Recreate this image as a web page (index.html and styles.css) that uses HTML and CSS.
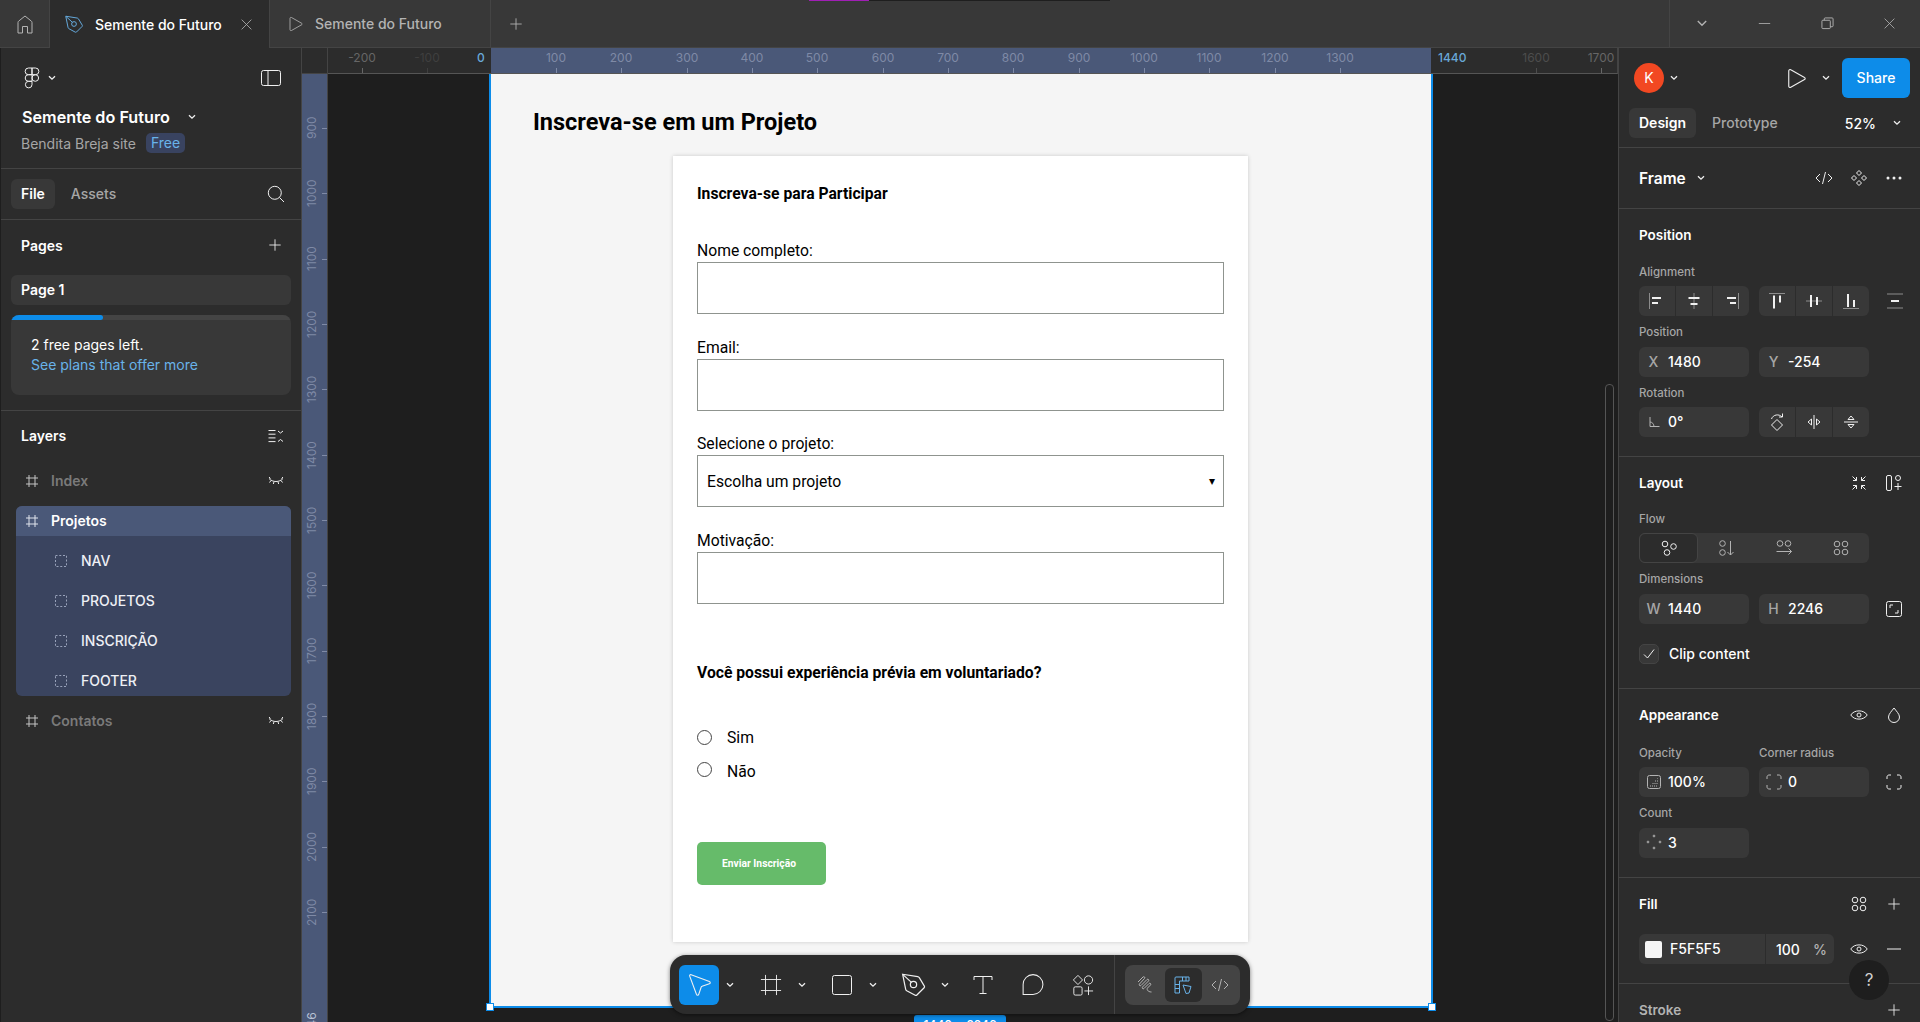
FILE: index.html
```html
<!DOCTYPE html>
<html lang="pt-BR">
<head>
    <meta charset="UTF-8">
    <title>Semente do Futuro</title>
    <link rel="stylesheet" href="styles.css">
</head>
<body>
    <svg class="sprite" xmlns="http://www.w3.org/2000/svg">
        <symbol id="i-chev" viewBox="0 0 10 6"><path d="M2 1.2l3 3 3-3"/></symbol>
        <symbol id="i-home" viewBox="0 0 24 24"><path d="M5 21V10.500c0-.6.2-1 .7-1.400L12 4l6.300 5.100c.5.4.7.8.7 1.400V21h-4.500v-6.500h-5V21z"/></symbol>
        <symbol id="i-pen" viewBox="0 0 24 24"><path d="M3 3.500l12.500 2c.6.1 1 .4 1.300.8l4.200 7c.3.5.2 1-.2 1.400l-6 6c-.4.4-1 .4-1.400.2l-7-3.800c-.5-.3-.8-.7-.9-1.300z"/><circle cx="12" cy="12" r="2.600"/><path d="M3.500 4l6.800 6.200"/></symbol>
        <symbol id="i-play" viewBox="0 0 24 24"><path d="M6 5.200c0-1 1-1.500 1.800-1L20 11.100c.8.4.8 1.400 0 1.800L7.800 19.800c-.8.5-1.800 0-1.800-1z"/></symbol>
        <symbol id="i-x" viewBox="0 0 16 16"><path d="M2 2l12 12M14 2L2 14"/></symbol>
        <symbol id="i-plus" viewBox="0 0 16 16"><path d="M8 1.500v13M1.500 8h13"/></symbol>
        <symbol id="i-minus" viewBox="0 0 16 16"><path d="M1 8h14"/></symbol>
        <symbol id="i-restore" viewBox="0 0 14 14"><rect x="1" y="3.500" width="9" height="9" rx="1"/><path d="M3.500 3.500V2c0-.6.4-1 1-1H12c.6 0 1 .4 1 1v7.500c0 .6-.4 1-1 1h-2"/></symbol>
        <symbol id="i-figma" viewBox="0 0 16 22"><path d="M8 1H4.500a3.300 3.300 0 000 6.700H8zM8 1h3.500a3.300 3.300 0 010 6.700H8zM8 7.700H4.500a3.300 3.300 0 000 6.600H8zM8 14.300H4.500A3.300 3.300 0 108 17.600z"/><circle cx="11.300" cy="11" r="3.300"/></symbol>
        <symbol id="i-side" viewBox="0 0 20 16"><rect x=".5" y=".5" width="19" height="15" rx="2"/><path d="M7 .5v15"/></symbol>
        <symbol id="i-search" viewBox="0 0 18 18"><circle cx="7.800" cy="7.800" r="6.500"/><path d="M12.500 12.500l4.500 4.500"/></symbol>
        <symbol id="i-collapse" viewBox="0 0 16 14"><path d="M.5 1.500h7M.5 5.200h7M.5 8.900h7M.5 12.600h7M10 2l2.500 2L15 2M10 12.500l2.500-2 2.500 2"/></symbol>
        <symbol id="i-hash" viewBox="0 0 14 14"><path d="M4 1v12M10 1v12M1 4h12M1 10h12"/></symbol>
        <symbol id="i-eyeoff" viewBox="0 0 16 10"><path d="M1 2.500c3.500 4 10.500 4 14 0M3 4.500L1.500 6.500M6 5.800L5.300 8M10 5.800l.7 2.200M13 4.500l1.500 2M1 1l1.500 1.600M15 1l-1.500 1.600"/></symbol>
        <symbol id="i-dashed" viewBox="0 0 12 12"><rect x=".5" y=".5" width="11" height="11" stroke-dasharray="2 1.750"/></symbol>
        <symbol id="i-code" viewBox="0 0 18 14"><path d="M5 3L1 7l4 4M13 3l4 4-4 4M10.500 1L7.500 13"/></symbol>
        <symbol id="i-comp" viewBox="0 0 16 16"><path d="M8 .5l2.500 2.500L8 5.500 5.500 3zM3 5.500L5.500 8 3 10.500.5 8zM13 5.500L15.500 8 13 10.500 10.500 8zM8 10.500l2.500 2.500L8 15.500 5.500 13z"/></symbol>
        <symbol id="i-dots" viewBox="0 0 16 4"><circle cx="2" cy="2" r="1.500"/><circle cx="8" cy="2" r="1.500"/><circle cx="14" cy="2" r="1.500"/></symbol>
        <symbol id="i-al-left" viewBox="0 0 18 18"><path stroke="#8c8c8c" d="M1.500 1v16"/><path stroke-width="2" d="M4 6h9M4 11h6"/></symbol>
        <symbol id="i-al-center" viewBox="0 0 18 18"><path stroke="#8c8c8c" d="M9 1v16"/><path stroke-width="2" d="M3.500 6h11M5.500 12h7"/></symbol>
        <symbol id="i-al-right" viewBox="0 0 18 18"><path stroke="#8c8c8c" d="M16.500 1v16"/><path stroke-width="2" d="M5 6h9M8 11h6"/></symbol>
        <symbol id="i-al-top" viewBox="0 0 18 18"><path stroke="#8c8c8c" d="M1 1.500h16"/><path stroke-width="2" d="M6 3.500v13M12 3.500v7"/></symbol>
        <symbol id="i-al-mid" viewBox="0 0 18 18"><path stroke="#8c8c8c" d="M1 9h16"/><path stroke-width="2" d="M6 3v12M12 5v8"/></symbol>
        <symbol id="i-al-bot" viewBox="0 0 18 18"><path stroke="#8c8c8c" d="M1 16.500h16"/><path stroke-width="2" d="M6 2v13M12 8v7"/></symbol>
        <symbol id="i-distrib" viewBox="0 0 18 16"><path stroke="#8c8c8c" d="M1 1h16M1 15h16"/><path stroke-width="2" d="M5 8h8"/></symbol>
        <symbol id="i-angle" viewBox="0 0 12 12"><path d="M2 1v9.500h9.500M2 6c2 0 4 2 4 4.500"/></symbol>
        <symbol id="i-rotate" viewBox="0 0 16 20"><path d="M8 7.500l5.500 5.500L8 18.500 2.500 13zM2.500 7C4 2.500 10 1.500 13 5M13.500 1.500V5H10"/></symbol>
        <symbol id="i-fliph" viewBox="0 0 16 16"><path d="M8 1v14M5.500 5v6L2 8zM10.500 5v6L14 8z"/></symbol>
        <symbol id="i-flipv" viewBox="0 0 16 16"><path d="M1 8h14M5 5.500h6L8 2zM5 10.500h6L8 14z"/></symbol>
        <symbol id="i-shrink" viewBox="0 0 16 16"><path d="M1.500 1.500l4 4M2 5.500h3.500V2M14.500 1.500l-4 4M14 5.500h-3.500V2M1.500 14.500l4-4M2 10.500h3.500V14M14.500 14.500l-4-4M14 10.500h-3.500V14"/></symbol>
        <symbol id="i-autolayout" viewBox="0 0 16 16"><rect x=".5" y=".5" width="5" height="15" rx="1.500"/><circle cx="12" cy="3" r="2.500"/><path d="M12 8v7M8.500 11.500h7"/></symbol>
        <symbol id="i-freeflow" viewBox="0 0 16 16"><circle cx="4" cy="4" r="2.800"/><circle cx="12.500" cy="6.500" r="2.800"/><circle cx="6" cy="12.500" r="2.800"/></symbol>
        <symbol id="i-vert" viewBox="0 0 16 16"><circle cx="3.500" cy="3.500" r="2.800"/><circle cx="3.500" cy="12.500" r="2.800"/><path d="M11.500 1v14M8.500 12l3 3 3-3"/></symbol>
        <symbol id="i-horiz" viewBox="0 0 16 16"><circle cx="4" cy="3.500" r="2.800"/><circle cx="12" cy="3.500" r="2.800"/><path d="M.5 11.500h15M12.500 8.500l3 3-3 3"/></symbol>
        <symbol id="i-grid" viewBox="0 0 16 16"><circle cx="4" cy="4" r="2.800"/><circle cx="12" cy="4" r="2.800"/><circle cx="4" cy="12" r="2.800"/><circle cx="12" cy="12" r="2.800"/></symbol>
        <symbol id="i-resize" viewBox="0 0 16 16"><rect x=".5" y=".5" width="15" height="15" rx="2"/><path d="M4 7V4h3M12 9v3H9"/></symbol>
        <symbol id="i-check" viewBox="0 0 12 12"><path d="M1 6.500l3.500 3.500L11 1.500"/></symbol>
        <symbol id="i-eye" viewBox="0 0 18 12"><path d="M.8 6C4 .5 14 .5 17.200 6 14 11.500 4 11.500.8 6z"/><circle cx="9" cy="6" r="2"/></symbol>
        <symbol id="i-drop" viewBox="0 0 14 16"><path d="M7 1c2 2.800 5.500 6 5.500 9a5.500 5.500 0 01-11 0C1.500 7 5 3.800 7 1z"/></symbol>
        <symbol id="i-opacity" viewBox="0 0 14 14"><rect x=".5" y=".5" width="13" height="13" rx="2"/><path d="M3 11h8M5.500 8.500h5.500M8 6h3M10.500 3.500h.5" stroke-dasharray="1 1"/></symbol>
        <symbol id="i-corners" viewBox="0 0 16 16"><path d="M1 5V3c0-1.100.9-2 2-2h2M11 1h2c1.100 0 2 .9 2 2v2M15 11v2c0 1.100-.9 2-2 2h-2M5 15H3c-1.100 0-2-.9-2-2v-2"/></symbol>
        <symbol id="i-count" viewBox="0 0 16 16"><circle cx="8" cy="2" r=".9"/><circle cx="2" cy="8" r=".9"/><circle cx="14" cy="8" r=".9"/><circle cx="8" cy="14" r=".9"/></symbol>
        <symbol id="i-move" viewBox="0 0 24 24"><path d="M3.300 4.600c-.3-.9.4-1.600 1.300-1.300l16.200 6c1 .4 1 1.700 0 2l-6.500 2.200c-.4.1-.7.4-.8.800l-2.200 6.500c-.3 1-1.600 1-2 0z"/></symbol>
        <symbol id="i-frame" viewBox="0 0 24 24"><path d="M6 1v22M18 1v22M1 6h22M1 18h22"/></symbol>
        <symbol id="i-rect" viewBox="0 0 24 24"><rect x="2.500" y="2.500" width="19" height="19" rx="2"/></symbol>
        <symbol id="i-text" viewBox="0 0 24 24"><path d="M3 7V3.500h18V7M12 3.500v17M8.500 20.500h7"/></symbol>
        <symbol id="i-comment" viewBox="0 0 24 24"><path d="M3 21.500V12a9.500 9.500 0 1 1 9.500 9.500z"/></symbol>
        <symbol id="i-actions" viewBox="0 0 24 24"><path d="M6.500 1.500l5 5-5 5-5-5z"/><circle cx="18" cy="6.500" r="4.500"/><rect x="2" y="14" width="9" height="9" rx="1.500"/><path d="M18 13.500v9.500M13.500 18.500h9.500"/></symbol>
        <symbol id="i-draw" viewBox="0 0 20 20"><path d="M2 7l5-5c1-1 2.500.5 1.500 1.500L3.500 9C2.500 10 4 11.500 5 10.500l6-6c1-1 2.500.5 1.500 1.500L6.500 12c-1 1 .5 2.500 1.500 1.500l5-5c1-1 2.500.5 1.500 1.500l-3 3c-1 1 0 4 4 4"/></symbol>
        <symbol id="i-design" viewBox="0 0 20 20"><path d="M2 18V3c0-.6.4-1 1-1h13v4H6.500v12zM9.500 2v4M13 2v4M2 9.500h4.500M2 13.500h4.500"/><path d="M10 10l8 1.500-2 6.500-3 .5z"/></symbol>
    </svg>

    <header class="topbar">
        <div class="top-home"><svg class="ic ic-24 muted"><use href="#i-home"/></svg></div>
        <div class="tab tab-active">
            <svg class="ic ic-22 blue"><use href="#i-pen"/></svg>
            <span class="tab-name">Semente do Futuro</span>
            <svg class="ic ic-13 tab-close"><use href="#i-x"/></svg>
        </div>
        <div class="tab">
            <svg class="ic ic-20 muted"><use href="#i-play"/></svg>
            <span class="tab-name">Semente do Futuro</span>
        </div>
        <div class="top-plus"><svg class="ic ic-14 muted"><use href="#i-plus"/></svg></div>
        <div class="top-spacer"></div>
        <div class="win-controls">
            <svg class="ic win-chev muted"><use href="#i-chev"/></svg>
            <svg class="ic ic-13 muted"><use href="#i-minus"/></svg>
            <svg class="ic ic-13 muted"><use href="#i-restore"/></svg>
            <svg class="ic ic-13 muted"><use href="#i-x"/></svg>
        </div>
        <div class="progress-line"><span></span></div>
    </header>

    <div class="main">
        <aside class="left-panel">
            <div class="file-head">
                <div class="logo-row">
                    <svg class="ic logo"><use href="#i-figma"/></svg>
                    <svg class="ic chev"><use href="#i-chev"/></svg>
                    <svg class="ic side-toggle"><use href="#i-side"/></svg>
                </div>
                <div class="file-title">Semente do Futuro <svg class="ic chev"><use href="#i-chev"/></svg></div>
                <div class="file-team">Bendita Breja site <span class="badge-free">Free</span></div>
            </div>
            <div class="left-tabs">
                <span class="pill">File</span>
                <span class="pill-off">Assets</span>
                <svg class="ic ic-18 left-search"><use href="#i-search"/></svg>
            </div>
            <div class="pages">
                <div class="left-head">Pages <svg class="ic ic-14"><use href="#i-plus"/></svg></div>
                <div class="page-row">Page 1</div>
                <div class="promo">
                    <div class="promo-bar"><span></span></div>
                    <p>2 free pages left.</p>
                    <a href="#">See plans that offer more</a>
                </div>
            </div>
            <div class="layers">
                <div class="left-head">Layers <svg class="ic collapse"><use href="#i-collapse"/></svg></div>
                <div class="layer hidden-layer">
                    <svg class="ic ic-14"><use href="#i-hash"/></svg>
                    <span>Index</span>
                    <svg class="ic eyeoff"><use href="#i-eyeoff"/></svg>
                </div>
                <div class="layer-group">
                    <div class="layer layer-selected">
                        <svg class="ic ic-14"><use href="#i-hash"/></svg>
                        <span>Projetos</span>
                    </div>
                    <div class="layer layer-child"><svg class="ic ic-12"><use href="#i-dashed"/></svg><span>NAV</span></div>
                    <div class="layer layer-child"><svg class="ic ic-12"><use href="#i-dashed"/></svg><span>PROJETOS</span></div>
                    <div class="layer layer-child"><svg class="ic ic-12"><use href="#i-dashed"/></svg><span>INSCRIÇÃO</span></div>
                    <div class="layer layer-child"><svg class="ic ic-12"><use href="#i-dashed"/></svg><span>FOOTER</span></div>
                </div>
                <div class="layer hidden-layer">
                    <svg class="ic ic-14"><use href="#i-hash"/></svg>
                    <span>Contatos</span>
                    <svg class="ic eyeoff"><use href="#i-eyeoff"/></svg>
                </div>
            </div>
        </aside>

        <div class="canvas-wrap">
            <div class="ruler-corner"></div>
            <div class="ruler-top">
                <div class="ruler-band"></div>
                <span class="rt rt-mid" style="left:34px"><i>-200</i></span>
                <span class="rt rt-dim" style="left:99px"><i>-100</i></span>
                <span class="rt-edge rt-zero">0</span>
                <span class="rt rt-on" style="left:228px"><i>100</i></span>
                <span class="rt rt-on" style="left:293px"><i>200</i></span>
                <span class="rt rt-on" style="left:359px"><i>300</i></span>
                <span class="rt rt-on" style="left:424px"><i>400</i></span>
                <span class="rt rt-on" style="left:489px"><i>500</i></span>
                <span class="rt rt-on" style="left:555px"><i>600</i></span>
                <span class="rt rt-on" style="left:620px"><i>700</i></span>
                <span class="rt rt-on" style="left:685px"><i>800</i></span>
                <span class="rt rt-on" style="left:751px"><i>900</i></span>
                <span class="rt rt-on" style="left:816px"><i>1000</i></span>
                <span class="rt rt-on" style="left:881px"><i>1100</i></span>
                <span class="rt rt-on" style="left:947px"><i>1200</i></span>
                <span class="rt rt-on" style="left:1012px"><i>1300</i></span>
                <span class="rt-edge rt-end">1440</span>
                <span class="rt rt-dim2" style="left:1208px"><i>1600</i></span>
                <span class="rt rt-mid" style="left:1273px"><i>1700</i></span>
            </div>
            <div class="ruler-left">
                <span class="rl" style="top:54px"><i>900</i></span>
                <span class="rl" style="top:119px"><i>1000</i></span>
                <span class="rl" style="top:185px"><i>1100</i></span>
                <span class="rl" style="top:250px"><i>1200</i></span>
                <span class="rl" style="top:315px"><i>1300</i></span>
                <span class="rl" style="top:381px"><i>1400</i></span>
                <span class="rl" style="top:446px"><i>1500</i></span>
                <span class="rl" style="top:511px"><i>1600</i></span>
                <span class="rl" style="top:577px"><i>1700</i></span>
                <span class="rl" style="top:642px"><i>1800</i></span>
                <span class="rl" style="top:707px"><i>1900</i></span>
                <span class="rl" style="top:773px"><i>2000</i></span>
                <span class="rl" style="top:838px"><i>2100</i></span>
                <span class="rl rl-end" style="top:953px"><i>2246</i></span>
            </div>
            <div class="stage">
                <div class="frame">
                    <h1>Inscreva-se em um Projeto</h1>
                    <form class="form-card">
                        <h2>Inscreva-se para Participar</h2>
                        <label class="fld-label fld-first">Nome completo:</label>
                        <div class="fld-box"></div>
                        <label class="fld-label">Email:</label>
                        <div class="fld-box"></div>
                        <label class="fld-label">Selecione o projeto:</label>
                        <div class="fld-box fld-select">Escolha um projeto <span class="sel-arrow">▾</span></div>
                        <label class="fld-label">Motivação:</label>
                        <div class="fld-box"></div>
                        <h3>Você possui experiência prévia em voluntariado?</h3>
                        <div class="radio-row"><span class="radio"></span>Sim</div>
                        <div class="radio-row radio-row-2"><span class="radio"></span>Não</div>
                        <div class="send-btn">Enviar Inscrição</div>
                    </form>
                    <span class="handle handle-l"></span>
                    <span class="handle handle-r"></span>
                    <span class="size-badge">1440 × 2246</span>
                </div>
                <div class="toolbar">
                    <span class="tool tool-on"><svg class="ic tool-move"><use href="#i-move"/></svg></span>
                    <svg class="ic chev tool-chev"><use href="#i-chev"/></svg>
                    <span class="tool"><svg class="ic ic-22"><use href="#i-frame"/></svg></span>
                    <svg class="ic chev tool-chev"><use href="#i-chev"/></svg>
                    <span class="tool"><svg class="ic ic-24"><use href="#i-rect"/></svg></span>
                    <svg class="ic chev tool-chev"><use href="#i-chev"/></svg>
                    <span class="tool"><svg class="ic tool-pen"><use href="#i-pen"/></svg></span>
                    <svg class="ic chev tool-chev"><use href="#i-chev"/></svg>
                    <span class="tool tool-text"><svg class="ic ic-24"><use href="#i-text"/></svg></span>
                    <span class="tool tool-comment"><svg class="ic tool-bubble"><use href="#i-comment"/></svg></span>
                    <span class="tool tool-actions"><svg class="ic ic-22"><use href="#i-actions"/></svg></span>
                    <span class="tool-sep"></span>
                    <div class="mode-group">
                        <span class="mode"><svg class="ic ic-20 muted"><use href="#i-draw"/></svg></span>
                        <span class="mode mode-on"><svg class="ic ic-20 blue"><use href="#i-design"/></svg></span>
                        <span class="mode"><svg class="ic code-ic muted"><use href="#i-code"/></svg></span>
                    </div>
                </div>
            </div>
        </div>

        <aside class="right-panel">
            <section class="sec sec-top">
                <div class="share-row">
                    <span class="avatar">K</span>
                    <svg class="ic chev"><use href="#i-chev"/></svg>
                    <svg class="ic play-ic"><use href="#i-play"/></svg>
                    <svg class="ic chev"><use href="#i-chev"/></svg>
                    <span class="share-btn">Share</span>
                </div>
                <div class="mode-row">
                    <span class="pill">Design</span>
                    <span class="pill-off">Prototype</span>
                    <span class="zoom-val">52%</span>
                    <svg class="ic chev"><use href="#i-chev"/></svg>
                </div>
            </section>
            <section class="sec sec-frame">
                <div class="sec-head">
                    <span class="frame-title">Frame <svg class="ic chev"><use href="#i-chev"/></svg></span>
                    <span class="head-icons">
                        <span class="hi"><svg class="ic code-ic"><use href="#i-code"/></svg></span>
                        <span class="hi"><svg class="ic ic-16"><use href="#i-comp"/></svg></span>
                        <span class="hi"><svg class="ic dots-ic"><use href="#i-dots"/></svg></span>
                    </span>
                </div>
            </section>
            <section class="sec sec-position">
                <div class="sec-head"><strong>Position</strong></div>
                <div class="lbl">Alignment</div>
                <div class="fgrid">
                    <div class="btn-group">
                        <span><svg class="ic ic-18"><use href="#i-al-left"/></svg></span>
                        <span><svg class="ic ic-18"><use href="#i-al-center"/></svg></span>
                        <span><svg class="ic ic-18"><use href="#i-al-right"/></svg></span>
                    </div>
                    <div class="btn-group">
                        <span><svg class="ic ic-18"><use href="#i-al-top"/></svg></span>
                        <span><svg class="ic ic-18"><use href="#i-al-mid"/></svg></span>
                        <span><svg class="ic ic-18"><use href="#i-al-bot"/></svg></span>
                    </div>
                    <svg class="ic ic-18 end-ic"><use href="#i-distrib"/></svg>
                </div>
                <div class="lbl">Position</div>
                <div class="fgrid">
                    <div class="field"><em>X</em>1480</div>
                    <div class="field"><em>Y</em>-254</div>
                </div>
                <div class="lbl">Rotation</div>
                <div class="fgrid">
                    <div class="field"><em><svg class="ic ic-12 muted"><use href="#i-angle"/></svg></em>0°</div>
                    <div class="btn-group">
                        <span><svg class="ic ic-20"><use href="#i-rotate"/></svg></span>
                        <span><svg class="ic ic-16"><use href="#i-fliph"/></svg></span>
                        <span><svg class="ic ic-16"><use href="#i-flipv"/></svg></span>
                    </div>
                </div>
            </section>
            <section class="sec sec-layout">
                <div class="sec-head">
                    <strong>Layout</strong>
                    <span class="head-icons">
                        <span class="hi"><svg class="ic ic-16"><use href="#i-shrink"/></svg></span>
                        <span class="hi"><svg class="ic ic-16"><use href="#i-autolayout"/></svg></span>
                    </span>
                </div>
                <div class="lbl">Flow</div>
                <div class="flow-group">
                    <span class="flow-on"><svg class="ic ic-16"><use href="#i-freeflow"/></svg></span>
                    <span><svg class="ic ic-16 muted"><use href="#i-vert"/></svg></span>
                    <span><svg class="ic ic-16 muted"><use href="#i-horiz"/></svg></span>
                    <span><svg class="ic ic-16 muted"><use href="#i-grid"/></svg></span>
                </div>
                <div class="lbl">Dimensions</div>
                <div class="fgrid">
                    <div class="field"><em>W</em>1440</div>
                    <div class="field"><em>H</em>2246</div>
                    <svg class="ic ic-16 end-ic"><use href="#i-resize"/></svg>
                </div>
                <div class="clip-row">
                    <span class="checkbox"><svg class="ic ic-12"><use href="#i-check"/></svg></span>
                    Clip content
                </div>
            </section>
            <section class="sec sec-appearance">
                <div class="sec-head">
                    <strong>Appearance</strong>
                    <span class="head-icons">
                        <span class="hi"><svg class="ic eye-ic"><use href="#i-eye"/></svg></span>
                        <span class="hi"><svg class="ic ic-16"><use href="#i-drop"/></svg></span>
                    </span>
                </div>
                <div class="fgrid">
                    <div class="lbl">Opacity</div>
                    <div class="lbl">Corner radius</div>
                </div>
                <div class="fgrid">
                    <div class="field"><em><svg class="ic ic-14 muted"><use href="#i-opacity"/></svg></em>100%</div>
                    <div class="field"><em><svg class="ic ic-16 muted"><use href="#i-corners"/></svg></em>0</div>
                    <svg class="ic ic-16 end-ic"><use href="#i-corners"/></svg>
                </div>
                <div class="lbl">Count</div>
                <div class="fgrid">
                    <div class="field"><em><svg class="ic ic-16 muted"><use href="#i-count"/></svg></em>3</div>
                </div>
            </section>
            <section class="sec sec-fill">
                <div class="sec-head">
                    <strong>Fill</strong>
                    <span class="head-icons">
                        <span class="hi"><svg class="ic ic-16"><use href="#i-grid"/></svg></span>
                        <span class="hi"><svg class="ic ic-14"><use href="#i-plus"/></svg></span>
                    </span>
                </div>
                <div class="fill-row">
                    <div class="fill-field">
                        <span class="swatch"></span>
                        <span class="fill-hex">F5F5F5</span>
                        <span class="fill-num">100</span>
                        <span class="fill-pct">%</span>
                    </div>
                    <span class="head-icons">
                        <span class="hi"><svg class="ic eye-ic"><use href="#i-eye"/></svg></span>
                        <span class="hi"><svg class="ic ic-16"><use href="#i-minus"/></svg></span>
                    </span>
                </div>
            </section>
            <section class="sec sec-stroke">
                <div class="sec-head">
                    <strong class="stroke-title">Stroke</strong>
                    <span class="head-icons">
                        <span class="hi"><svg class="ic ic-14"><use href="#i-plus"/></svg></span>
                    </span>
                </div>
            </section>
            <span class="help-btn">?</span>
        </aside>
    </div>
</body>
</html>
```

FILE: styles.css
```css
* {
    box-sizing: border-box;
}
body {
    margin: 0;
    height: 1022px;
    overflow: hidden;
    background-color: #2c2c2c;
    color: #fff;
    font-family: Inter, "Noto Sans", sans-serif;
    font-size: 14px;
    display: flex;
    flex-direction: column;
}
.sprite {
    display: none;
}

/* icons */
.ic {
    fill: none;
    stroke: #f0f0f0;
    stroke-width: 1;
    flex: none;
    display: block;
}
.muted {
    stroke: #b3b3b3;
}
.blue {
    stroke: #69b3ea;
}
.ic-12 { width: 12px; height: 12px; }
.ic-13 { width: 13px; height: 13px; }
.ic-14 { width: 14px; height: 14px; }
.ic-16 { width: 16px; height: 16px; }
.ic-18 { width: 18px; height: 18px; }
.ic-20 { width: 20px; height: 20px; }
.ic-22 { width: 22px; height: 22px; }
.ic-24 { width: 24px; height: 24px; }
.chev {
    width: 10px;
    height: 6px;
    stroke-width: 1.3;
}

/* top bar */
.topbar {
    height: 48px;
    flex: none;
    display: flex;
    align-items: stretch;
    background-color: #383838;
    border-bottom: 1px solid #444;
    position: relative;
}
.top-home {
    width: 49px;
    display: flex;
    align-items: center;
    justify-content: center;
}
.tab {
    width: 221px;
    display: flex;
    align-items: center;
    gap: 10px;
    padding-left: 15px;
    border-right: 1px solid #444;
    color: #b3b3b3;
    font-weight: 500;
}
.tab-active {
    padding-left: 13px;
    background-color: #2c2c2c;
    border-left: 1px solid #444;
    color: #fff;
    margin-bottom: -1px;
}
.tab-name {
    width: 126px;
    white-space: nowrap;
}
.tab-close {
    margin-left: 9px;
    stroke: #b3b3b3;
}
.top-plus {
    width: 50px;
    display: flex;
    align-items: center;
    justify-content: center;
}
.top-spacer {
    flex: 1;
}
.win-controls {
    width: 251px;
    border-left: 1px solid #444;
    display: flex;
    align-items: center;
    justify-content: space-between;
    padding: 0 24px 0 25px;
}
.win-chev {
    width: 14px;
    height: 9px;
}
.progress-line {
    position: absolute;
    left: 809px;
    top: 0;
    width: 301px;
    height: 1px;
    background-color: #1e1e1e;
}
.progress-line span {
    display: block;
    width: 60px;
    height: 1px;
    background-color: #a01fb5;
}

.main {
    flex: 1;
    display: flex;
    min-height: 0;
}

/* left panel */
.left-panel {
    width: 302px;
    flex: none;
    background-color: #2c2c2c;
    border-left: 1px solid #1e1e1e;
    border-right: 1px solid #444;
}
.file-head {
    height: 121px;
    padding: 20px 0 0 20px;
    border-bottom: 1px solid #444;
}
.logo-row {
    display: flex;
    align-items: center;
    height: 20px;
}
.logo {
    width: 16px;
    height: 22px;
    margin-left: 3px;
}
.logo-row .chev {
    margin-left: 7px;
}
.side-toggle {
    width: 20px;
    height: 16px;
    margin-left: auto;
    margin-right: 20px;
}
.file-title {
    display: flex;
    align-items: center;
    gap: 17px;
    margin: 19px 0 0 1px;
    font-size: 16.2px;
    font-weight: 600;
    height: 20px;
    white-space: nowrap;
}
.file-team {
    display: flex;
    align-items: center;
    gap: 10px;
    margin-top: 6px;
    color: #a6a6a6;
}
.badge-free {
    background-color: #394360;
    color: #69b3ea;
    border-radius: 5px;
    height: 20px;
    line-height: 20px;
    padding: 0 5px;
}
.left-tabs {
    height: 51px;
    display: flex;
    align-items: center;
    padding-left: 10px;
    border-bottom: 1px solid #444;
}
.pill {
    height: 30px;
    line-height: 30px;
    padding: 0 10px;
    background-color: #383838;
    border-radius: 6px;
    font-weight: 600;
}
.pill-off {
    margin-left: 6px;
    padding: 0 10px 1px;
    color: #a6a6a6;
    font-weight: 500;
}
.left-search {
    margin-left: auto;
    margin-right: 16px;
}
.pages {
    height: 191px;
    padding: 0 10px;
    border-bottom: 1px solid #444;
}
.left-head {
    display: flex;
    align-items: center;
    justify-content: space-between;
    height: 51px;
    padding: 0 9px 1px 10px;
    font-weight: 600;
}
.left-head + .page-row {
    margin-top: 4px;
}
.page-row {
    height: 30px;
    line-height: 30px;
    padding-left: 10px;
    background-color: #383838;
    border-radius: 6px;
    font-weight: 600;
}
.promo {
    margin-top: 10px;
    height: 80px;
    background-color: #383838;
    border-radius: 8px;
    overflow: hidden;
}
.promo-bar {
    height: 5px;
    background-color: #444;
}
.promo-bar span {
    display: block;
    width: 92px;
    height: 5px;
    background-color: #0d8ce9;
    border-radius: 0 3px 3px 0;
}
.promo p {
    margin: 15px 0 0 20px;
    line-height: 20px;
}
.promo a {
    display: block;
    margin-left: 20px;
    line-height: 20px;
    color: #69b3ea;
    text-decoration: none;
}
.layers {
    padding: 0 10px 0 15px;
}
.layers .left-head {
    padding: 0 7px 1px 5px;
    height: 50px;
}
.collapse {
    width: 16px;
    height: 14px;
}
.layer {
    height: 30px;
    display: flex;
    align-items: center;
    font-weight: 500;
    padding-bottom: 1px;
}
.layer .ic-14 {
    margin-left: 9px;
    margin-right: 12px;
}
.hidden-layer {
    margin-top: 10px;
    color: #7a7a7a;
    font-weight: 600;
}
.layers .left-head + .hidden-layer {
    margin-top: 5px;
}
.hidden-layer .ic-14 {
    stroke: #c4c4c4;
}
.eyeoff {
    width: 16px;
    height: 10px;
    margin-left: auto;
    margin-right: 7px;
}
.layer-group {
    margin-top: 10px;
    background-color: #3a445f;
    border-radius: 6px;
    overflow: hidden;
}
.layer-selected {
    background-color: #4a5878;
    font-weight: 600;
}
.layer-selected .ic-14 {
    stroke: #dfe3ec;
}
.layer-child {
    margin-top: 10px;
    padding-left: 39px;
    color: #eef0f5;
}
.layer-child .ic-12 {
    margin-right: 14px;
    stroke: #98a2ba;
}

/* canvas and rulers */
.canvas-wrap {
    flex: 1;
    display: grid;
    grid-template-columns: 26px 1fr;
    grid-template-rows: 26px 1fr;
    min-width: 0;
    background-color: #1e1e1e;
    overflow: hidden;
}
.ruler-corner {
    background-color: #2c2c2c;
    border-right: 1px solid #444;
    border-bottom: 1px solid #444;
}
.ruler-top {
    position: relative;
    background-color: #2c2c2c;
    border-bottom: 1px solid #555;
    border-right: 1px solid #444;
    font-size: 12px;
    overflow: hidden;
}
.ruler-band {
    position: absolute;
    left: 163px;
    top: 0;
    bottom: 0;
    width: 940px;
    background-color: #4a5878;
}
.rt {
    position: absolute;
    top: 20px;
    width: 1px;
    height: 5px;
    background-color: currentColor;
}
.rt i {
    position: absolute;
    left: -30px;
    top: -18px;
    width: 60px;
    text-align: center;
    font-style: normal;
    line-height: 16px;
}
.rt-on { color: #7f8aa6; }
.rt-mid { color: #666; }
.rt-dim { color: #3f3f3f; }
.rt-dim2 { color: #4d4d4d; }
.rt-edge {
    position: absolute;
    top: 2px;
    line-height: 16px;
    color: #69a8d8;
    font-weight: 500;
}
.rt-zero {
    left: 149px;
}
.rt-end {
    left: 1110px;
}
.ruler-left {
    position: relative;
    background-color: #4a5878;
    border-right: 1px solid #444;
    font-size: 12px;
    overflow: hidden;
}
.rl {
    position: absolute;
    right: 0;
    width: 5px;
    height: 1px;
    background-color: #7f8aa6;
}
.rl i {
    position: absolute;
    right: 7px;
    top: -30px;
    width: 16px;
    height: 60px;
    line-height: 16px;
    writing-mode: vertical-rl;
    transform: rotate(180deg);
    text-align: center;
    font-style: normal;
    color: #7f8aa6;
}
.rl-end i {
    color: #b9c2d6;
}
.stage {
    position: relative;
    overflow: hidden;
}
.frame {
    position: absolute;
    left: 163px;
    top: 0;
    width: 940px;
    height: 932px;
    background-color: #f5f5f5;
    box-shadow: -2px 0 0 #0d8ce9, 2px 0 0 #0d8ce9, 0 2px 0 #0d8ce9;
    color: #000;
    font-family: Roboto, "Liberation Sans", sans-serif;
    padding-left: 42px;
}
.frame h1 {
    margin: 0;
    padding-top: 34px;
    font-size: 23.5px;
    line-height: 28px;
    font-weight: 700;
}
.form-card {
    margin: 20px 0 0 140px;
    width: 575px;
    height: 786px;
    padding: 23px 24px 0;
    background-color: #fff;
    box-shadow: 0 0 4px rgba(0, 0, 0, 0.18);
}
.form-card h2 {
    margin: 0;
    font-size: 15.7px;
    line-height: 30px;
    font-weight: 700;
}
.fld-label {
    display: block;
    margin-top: 23.67px;
    font-size: 15.7px;
    line-height: 19px;
    height: 19px;
}
.fld-first {
    margin-top: 32px;
}
.fld-box {
    height: 52px;
    width: 527px;
    margin-top: 2px;
    border: 1px solid #8f948f;
}
.fld-select {
    display: flex;
    align-items: center;
    justify-content: space-between;
    padding: 0 8px 0 9px;
    font-size: 15.7px;
}
.sel-arrow {
    font-size: 12px;
}
.form-card h3 {
    margin: 54px 0 0;
    font-size: 15.7px;
    line-height: 30px;
    font-weight: 700;
}
.radio-row {
    display: flex;
    align-items: center;
    margin-top: 36px;
    height: 28px;
    font-size: 15.7px;
}
.radio-row-2 {
    margin-top: 6px;
}
.radio-row-2 .radio {
    margin-bottom: 4px;
}
.radio {
    width: 15px;
    height: 15px;
    margin-right: 15px;
    border: 1px solid #444;
    border-radius: 50%;
}
.send-btn {
    width: 129px;
    height: 43px;
    margin-top: 56px;
    line-height: 43px;
    padding-left: 25px;
    background-color: #66bb6a;
    border-radius: 5px;
    color: #fff;
    font-size: 10.3px;
    font-weight: 700;
}
.handle {
    position: absolute;
    bottom: -5px;
    width: 8px;
    height: 8px;
    background-color: #fff;
    border: 1px solid #0d8ce9;
}
.handle-l { left: -5px; }
.handle-r { right: -5px; }
.size-badge {
    position: absolute;
    top: 941px;
    left: 423px;
    width: 92px;
    height: 20px;
    border-radius: 3px;
    background-color: #0d8ce9;
    color: #fff;
    font: 500 12px Inter, sans-serif;
    line-height: 20px;
    text-align: center;
}

/* bottom toolbar */
.toolbar {
    position: absolute;
    left: 342px;
    top: 881px;
    width: 580px;
    height: 59px;
    display: flex;
    align-items: center;
    padding-left: 9px;
    background-color: #2c2c2c;
    border-radius: 16px;
    box-shadow: 0 1px 4px rgba(0, 0, 0, 0.5);
}
.tool {
    width: 40px;
    height: 40px;
    display: flex;
    align-items: center;
    justify-content: center;
    border-radius: 6px;
}
.tool-on {
    background-color: #0d8ce9;
}
.tool-move {
    width: 27px;
    height: 27px;
}
.tool-pen {
    width: 29px;
    height: 29px;
}
.tool-bubble {
    width: 25px;
    height: 25px;
}
.tool-chev {
    margin: 0 8px 0 6px;
}
.tool-chev + .tool {
    margin-left: 7.5px;
}
.tool-chev + .tool-text {
    margin-left: 5px;
}
.tool-comment,
.tool-actions {
    margin-left: 10px;
}
.tool-sep {
    width: 1px;
    height: 59px;
    margin-left: 11px;
    background-color: #444;
}
.mode-group {
    width: 115px;
    height: 40px;
    margin-left: 10px;
    padding: 3px 0 3px 3px;
    display: flex;
    align-items: center;
    background-color: #444;
    border-radius: 8px;
}
.mode {
    width: 37px;
    height: 34px;
    display: flex;
    align-items: center;
    justify-content: center;
    border-radius: 6px;
}
.mode-on {
    background-color: #2c2c2c;
}
.code-ic {
    width: 18px;
    height: 14px;
}

/* right panel */
.right-panel {
    width: 302px;
    flex: none;
    position: relative;
    background-color: #2c2c2c;
    border-left: 1px solid #444;
}
.sec {
    padding: 14px 0 0 20px;
    border-bottom: 1px solid #444;
}
.sec-head {
    display: flex;
    align-items: center;
    justify-content: space-between;
    height: 24px;
    margin-bottom: 8.5px;
    padding-right: 14px;
}
.sec-head strong {
    font-weight: 600;
    font-size: 13.5px;
}
.head-icons {
    display: flex;
    gap: 11px;
}
.hi {
    width: 24px;
    height: 24px;
    display: flex;
    align-items: center;
    justify-content: center;
}
.dots-ic {
    width: 16px;
    height: 4px;
    fill: #f0f0f0;
    stroke: none;
}
.eye-ic {
    width: 18px;
    height: 12px;
}
.sec-top {
    height: 100px;
    padding: 10px 0 0 15px;
}
.share-row {
    height: 40px;
    display: flex;
    align-items: center;
}
.avatar {
    width: 30px;
    height: 30px;
    border-radius: 50%;
    background-color: #f24822;
    text-align: center;
    line-height: 30px;
}
.share-row .chev {
    margin-left: 5px;
}
.play-ic {
    width: 27px;
    height: 27px;
    margin-left: 103px;
}
.share-row .play-ic + .chev {
    margin-left: 12px;
}
.share-btn {
    width: 68px;
    height: 40px;
    margin-left: 11px;
    background-color: #0d8ce9;
    border-radius: 6px;
    text-align: center;
    line-height: 40px;
    font-weight: 500;
}
.mode-row {
    margin: 10px 0 0 -5px;
    height: 30px;
    display: flex;
    align-items: center;
}
.mode-row .pill-off {
    margin-left: 6px;
}
.zoom-val {
    margin-left: auto;
    margin-right: 16px;
    font-weight: 500;
}
.mode-row .chev {
    margin-right: 18px;
}
.sec-frame {
    height: 61px;
    padding-top: 18px;
}
.frame-title {
    display: flex;
    align-items: center;
    gap: 10px;
    font-size: 15.5px;
    font-weight: 600;
}
.sec-position {
    height: 248px;
}
.sec-layout {
    height: 232px;
}
.sec-layout .sec-head {
    margin-bottom: 7.5px;
}
.sec-appearance {
    height: 189px;
}
.sec-appearance .sec-head {
    margin-bottom: 9.5px;
}
.sec-fill {
    height: 106px;
}
.sec-fill .sec-head {
    margin-bottom: 18px;
}
.sec-stroke {
    border-bottom: 0;
}
.sec-head .stroke-title {
    color: #b3b3b3;
}
.lbl {
    height: 30.5px;
    padding-top: 6px;
    line-height: 20px;
    font-size: 11.5px;
    font-weight: 500;
    color: #a6a6a6;
}
.fgrid {
    display: grid;
    grid-template-columns: 110px 110px 24px;
    column-gap: 10px;
    align-items: center;
}
.end-ic {
    margin-left: 6.5px;
}
.field {
    height: 30px;
    display: flex;
    align-items: center;
    background-color: #383838;
    border-radius: 6px;
    font-weight: 500;
    padding-bottom: 1px;
}
.field em {
    width: 29px;
    display: flex;
    justify-content: center;
    font-style: normal;
    color: #a6a6a6;
}
.btn-group {
    height: 30px;
    display: flex;
    background-color: #383838;
    border-radius: 6px;
}
.btn-group span {
    flex: 1;
    display: flex;
    align-items: center;
    justify-content: center;
    border-left: 1px solid #2c2c2c;
}
.btn-group span:first-child {
    border-left: 0;
}
.flow-group {
    width: 230px;
    height: 30px;
    display: flex;
    background-color: #383838;
    border-radius: 6px;
}
.flow-group span {
    flex: 1;
    display: flex;
    align-items: center;
    justify-content: center;
}
.flow-group .flow-on {
    background-color: #2c2c2c;
    border: 1px solid #444;
    border-radius: 6px;
}
.clip-row {
    display: flex;
    align-items: center;
    gap: 10px;
    margin-top: 20px;
    font-weight: 500;
}
.checkbox {
    width: 20px;
    height: 20px;
    display: flex;
    align-items: center;
    justify-content: center;
    background-color: #383838;
    border: 1px solid #444;
    border-radius: 5px;
}
.fill-row {
    display: flex;
    align-items: center;
    justify-content: space-between;
    padding-right: 14px;
}
.fill-field {
    width: 195px;
    height: 30px;
    display: flex;
    align-items: center;
    background-color: #383838;
    border-radius: 6px;
    font-weight: 500;
}
.swatch {
    width: 17px;
    height: 17px;
    margin-left: 6px;
    background-color: #f5f5f5;
    border-radius: 2px;
}
.fill-hex {
    width: 96px;
    margin-left: 8px;
    height: 30px;
    line-height: 30px;
    border-right: 1px solid #2c2c2c;
}
.fill-num {
    margin-left: 10px;
}
.fill-pct {
    margin-left: 13px;
    color: #b3b3b3;
}
.help-btn {
    position: absolute;
    left: 230px;
    top: 912px;
    width: 40px;
    height: 40px;
    border-radius: 50%;
    background-color: #1e1e1e;
    color: #d0d0d0;
    text-align: center;
    line-height: 40px;
    font-size: 17px;
}
/* the canvas scrollbar */
.stage::after {
    content: "";
    position: absolute;
    right: 4px;
    top: 310px;
    width: 7px;
    height: 635px;
    border: 1px solid #555;
    border-radius: 4px;
}
```
